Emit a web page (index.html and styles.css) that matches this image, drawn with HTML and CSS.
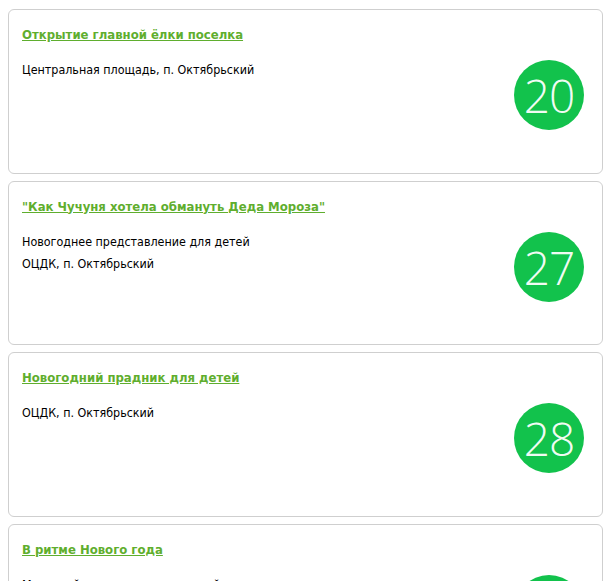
FILE: index.html
```html
<!DOCTYPE html>
<html lang="ru">
<head>
<meta charset="utf-8">
<title>Афиша</title>
<link rel="stylesheet" href="styles.css">
</head>
<body>
<div class="events">
  <div class="event">
    <div class="event-info">
      <a class="event-title" href="#">Открытие главной ёлки поселка</a>
      <div class="event-text">
        <p>Центральная площадь, п. Октябрьский</p>
      </div>
    </div>
    <div class="event-day">20</div>
  </div>
  <div class="event">
    <div class="event-info">
      <a class="event-title" href="#">"Как Чучуня хотела обмануть Деда Мороза"</a>
      <div class="event-text">
        <p>Новогоднее представление для детей</p>
        <p>ОЦДК, п. Октябрьский</p>
      </div>
    </div>
    <div class="event-day">27</div>
  </div>
  <div class="event">
    <div class="event-info">
      <a class="event-title" href="#">Новогодний прадник для детей</a>
      <div class="event-text">
        <p>ОЦДК, п. Октябрьский</p>
      </div>
    </div>
    <div class="event-day">28</div>
  </div>
  <div class="event">
    <div class="event-info">
      <a class="event-title" href="#">В ритме Нового года</a>
      <div class="event-text">
        <p>Массовый праздник для жителей</p>
      </div>
    </div>
    <div class="event-day">30</div>
  </div>
</div>
</body>
</html>
```
FILE: styles.css
```css
html, body {
  margin: 0;
  padding: 0;
  background: #fff;
}

body {
  padding: 9px 6px 0 8px;
  font-family: Tahoma, "DejaVu Sans Condensed", "DejaVu Sans", sans-serif;
  font-size: 12.4px;
  color: #000;
}

.events {
  display: flex;
  flex-direction: column;
  gap: 7px;
}

.event {
  display: flex;
  height: 162.5px;
  border: 1px solid #cfcfcf;
  border-radius: 6px;
  padding: 0 18px 0 13px;
  overflow: hidden;
}

.event-info {
  flex: 1;
  padding-top: 17px;
}

.event-title {
  font-weight: bold;
  font-size: 13px;
  color: #5fae2e;
  text-decoration: underline;
}

.event-text {
  margin-top: 17px;
}

.event-text p {
  margin: 0;
  line-height: 22px;
}

.event-day {
  align-self: flex-start;
  margin-top: 50px;
  width: 70px;
  height: 70px;
  border-radius: 50%;
  background: #12c24c;
  color: rgba(255, 255, 255, 0.95);
  font-family: "Open Sans", Lato, sans-serif;
  font-weight: 300;
  font-size: 46px;
  line-height: 70px;
  text-align: center;
  letter-spacing: -1px;
}
```
